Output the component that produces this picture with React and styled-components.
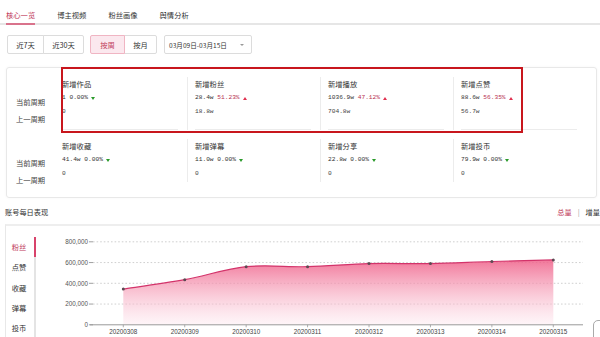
import React from 'react'
import styled, { createGlobalStyle } from 'styled-components'

const GlobalStyle = createGlobalStyle`
  html, body {
    margin: 0;
    padding: 0;
    background: #fff;
  }
  body {
    font-family: "Noto Sans CJK SC", "Noto Sans", sans-serif;
    color: #333;
  }
  * {
    box-sizing: border-box;
  }
`

const ACCENT = '#c0395a'
const CJK = `"Noto Sans CJK SC", "Noto Sans", sans-serif`
const MONO = `"Liberation Mono", "Noto Sans CJK SC", monospace`

const Page = styled.div`
  position: relative;
  width: 600px;
  height: 337px;
  overflow: hidden;
`

const TabBar = styled.div`
  display: flex;
  gap: 22px;
  height: 25px;
  padding-left: 6px;
  border-bottom: 2px solid #e6e6e6;
`

const Tab = styled.div`
  font-size: 7.3px;
  line-height: 14px;
  padding: 8px 0 1px;
  margin-bottom: -2px;
  height: 25px;
  color: ${p => (p.active ? ACCENT : '#333')};
  border-bottom: 2px solid ${p => (p.active ? '#d9738c' : 'transparent')};
`

const Toolbar = styled.div`
  display: flex;
  align-items: center;
  margin-top: 10px;
  padding-left: 7px;
  height: 19px;
`

const BtnGroup = styled.div`
  display: flex;
  margin-right: ${p => p.gap || 6}px;
`

const Btn = styled.div`
  position: relative;
  width: ${p => p.w}px;
  height: 19px;
  margin-left: ${p => (p.first ? 0 : -1)}px;
  display: flex;
  align-items: center;
  justify-content: center;
  font-size: 7.3px;
  border: 1px solid ${p => (p.active ? '#f0b5c3' : '#dcdcdc')};
  background: ${p => (p.active ? '#fbe8ee' : '#fff')};
  color: ${p => (p.active ? ACCENT : '#333')};
  z-index: ${p => (p.active ? 1 : 0)};
  border-radius: ${p => (p.first ? '2px 0 0 2px' : '0 2px 2px 0')};
`

const DateSelect = styled.div`
  width: 88px;
  height: 19px;
  display: flex;
  align-items: center;
  justify-content: space-between;
  padding: 0 7px 0 4px;
  border: 1px solid #dcdcdc;
  border-radius: 2px;
  font-size: 6.6px;
  color: #333;
`

const Caret = styled.span`
  width: 0;
  height: 0;
  border-left: 2px solid transparent;
  border-right: 2px solid transparent;
  border-top: 2px solid #999;
`

const MetricCard = styled.div`
  position: relative;
  margin: 13px 0 0 6px;
  width: 591px;
  border: 1px solid #e8e8e8;
  border-radius: 3px;
  box-shadow: 0 0 3px rgba(0, 0, 0, 0.04);
  padding-bottom: 9px;
`

const Highlight = styled.div`
  position: absolute;
  left: 54px;
  top: -1px;
  width: 462px;
  height: 65.5px;
  border: 2px solid #c8161d;
  pointer-events: none;
`

const MetricRow = styled.div`
  display: flex;
  align-items: flex-start;
  padding-top: 9px;
`

const LabelCol = styled.div`
  width: 47px;
  padding-top: ${p => p.offset}px;
  text-align: center;
  font-size: 7.3px;
  line-height: 16.5px;
  color: #444;
`

const Cell = styled.div`
  width: 133px;
  padding-left: 7px;
  border-left: 1px solid ${p => (p.first ? 'transparent' : '#ececec')};
`

const CellInner = styled.div`
  width: 116px;
  padding-bottom: ${p => (p.underline ? 10 : 0)}px;
  border-bottom: 1px solid ${p => (p.underline ? '#ececec' : 'transparent')};
`

const CellTitle = styled.div`
  font-size: 7.3px;
  line-height: 14px;
  color: #333;
  font-family: ${CJK};
`

const CellValue = styled.div`
  display: flex;
  align-items: center;
  font-family: ${MONO};
  font-size: 6.2px;
  line-height: 14px;
  color: #333;
  white-space: pre;
`

const Pct = styled.span`
  color: ${p => (p.up ? '#b8304f' : '#333')};
`

const Arrow = styled.span`
  display: inline-block;
  width: 0;
  height: 0;
  margin-left: 3px;
  border-left: 2.2px solid transparent;
  border-right: 2.2px solid transparent;
  ${p =>
    p.up
      ? 'border-bottom: 3px solid #e0304f;'
      : 'border-top: 3px solid #2a9a2a;'}
`

const PrevValue = styled.div`
  font-family: ${MONO};
  font-size: 6.2px;
  line-height: 14px;
  color: #444;
`

const SectionHeader = styled.div`
  display: flex;
  justify-content: space-between;
  height: 26px;
  padding: 7px 0 0 5px;
  font-size: 7.2px;
  line-height: 14px;
`

const Switcher = styled.div`
  display: flex;
  gap: 6px;
`

const SwitchItem = styled.span`
  color: ${p => (p.active ? ACCENT : '#333')};
`

const Pipe = styled.span`
  color: #999;
`

const ChartCard = styled.div`
  display: flex;
  margin-left: 5px;
  width: 600px;
  height: 130px;
  border: 1px solid #e8e8e8;
  border-top: 2px solid #eeeeee;
  background: #fff;
`

const SideMenu = styled.div`
  width: 30px;
  padding-top: 11px;
  display: flex;
  flex-direction: column;
`

const MenuItem = styled.div`
  height: 20.3px;
  flex-shrink: 0;
  display: flex;
  align-items: center;
  justify-content: center;
  font-size: 7.3px;
  color: ${p => (p.active ? ACCENT : '#333')};
  border-right: 2px solid ${p => (p.active ? '#d8436b' : '#e4e4e4')};
  padding-right: 2px;
`

const FloatTab = styled.div`
  position: absolute;
  left: 593px;
  top: 320px;
  width: 16px;
  height: 30px;
  border: 1px solid #aaa;
  border-radius: 5px;
  background: #fff;
`

const metrics = [
  [
    { title: '新增作品', cur: '1', pct: '0.00%', up: false, prev: '0' },
    { title: '新增粉丝', cur: '28.4w', pct: '51.23%', up: true, prev: '18.8w' },
    { title: '新增播放', cur: '1036.9w', pct: '47.12%', up: true, prev: '704.8w' },
    { title: '新增点赞', cur: '88.6w', pct: '56.35%', up: true, prev: '56.7w' },
  ],
  [
    { title: '新增收藏', cur: '41.4w', pct: '0.00%', up: false, prev: '0' },
    { title: '新增弹幕', cur: '11.0w', pct: '0.00%', up: false, prev: '0' },
    { title: '新增分享', cur: '22.8w', pct: '0.00%', up: false, prev: '0' },
    { title: '新增投币', cur: '79.9w', pct: '0.00%', up: false, prev: '0' },
  ],
]

const days = ['20200308', '20200309', '20200310', '20200311', '20200312', '20200313', '20200314', '20200315']
const fans = [345000, 435000, 560000, 560000, 590000, 590000, 610000, 625000]

// chart geometry, svg coords
const X0 = 87.3
const XSTEP = 61.43
const BASE = 98.8
const TOP = 15.8
const GRID_L = 57
const GRID_R = 547
const toY = v => BASE - (v / 800000) * (BASE - TOP)

function smoothPath(pts) {
  let d = `M${pts[0][0]},${pts[0][1]}`
  for (let i = 0; i < pts.length - 1; i++) {
    const p0 = pts[i - 1] || pts[i]
    const p1 = pts[i]
    const p2 = pts[i + 1]
    const p3 = pts[i + 2] || p2
    const c1x = p1[0] + (p2[0] - p0[0]) / 6
    const c1y = p1[1] + (p2[1] - p0[1]) / 6
    const c2x = p2[0] - (p3[0] - p1[0]) / 6
    const c2y = p2[1] - (p3[1] - p1[1]) / 6
    d += ` C${c1x},${c1y} ${c2x},${c2y} ${p2[0]},${p2[1]}`
  }
  return d
}

function FansChart() {
  const pts = fans.map((v, i) => [X0 + i * XSTEP, toY(v)])
  const line = smoothPath(pts)
  const last = pts[pts.length - 1]
  const area = `${line} L${last[0]},${BASE} L${pts[0][0]},${BASE} Z`
  const ticks = [800000, 600000, 400000, 200000, 0]

  return (
    <svg width="565" height="128" style={{ display: 'block', flexShrink: 0 }}>
      <defs>
        <linearGradient id="fansFill" x1="0" y1="0" x2="0" y2="1">
          <stop offset="0%" stopColor="#ef5f88" stopOpacity="0.85" />
          <stop offset="100%" stopColor="#fde6ee" stopOpacity="0.4" />
        </linearGradient>
      </defs>
      {ticks.map(t => {
        const y = toY(t)
        return (
          <g key={t}>
            <text
              x="52"
              y={y + 2.2}
              textAnchor="end"
              fontFamily="Liberation Sans, sans-serif"
              fontSize="6.3"
              fill="#555"
            >
              {t === 0 ? '0' : t.toLocaleString('en-US')}
            </text>
            <line x1="53" x2="57" y1={y} y2={y} stroke="#888" strokeWidth="0.8" />
            {t !== 0 && (
              <line
                x1={GRID_L}
                x2={GRID_R}
                y1={y}
                y2={y}
                stroke="#c4c4c4"
                strokeWidth="0.8"
                strokeDasharray="1.6 2"
              />
            )}
          </g>
        )
      })}
      <path d={area} fill="url(#fansFill)" />
      <path d={line} fill="none" stroke="#d3336a" strokeWidth="1.2" />
      <line x1="54" x2={GRID_R} y1={BASE} y2={BASE} stroke="#999" strokeWidth="1" />
      {days.map((d, i) => {
        const x = X0 + i * XSTEP
        return (
          <g key={d}>
            <line x1={x} x2={x} y1={BASE} y2={BASE + 2.5} stroke="#999" strokeWidth="0.8" />
            <text
              x={x}
              y="108.3"
              textAnchor="middle"
              fontFamily="Liberation Sans, sans-serif"
              fontSize="6.3"
              fill="#444"
            >
              {d}
            </text>
          </g>
        )
      })}
      {pts.map((p, i) => (
        <circle key={i} cx={p[0]} cy={p[1]} r="1.5" fill="#5d4952" />
      ))}
    </svg>
  )
}

function Metric({ m, first, underline }) {
  return (
    <Cell first={first}>
      <CellInner underline={underline}>
        <CellTitle>{m.title}</CellTitle>
        <CellValue>
          {m.cur + ' '}
          <Pct up={m.up}>{m.pct}</Pct>
          <Arrow up={m.up} />
        </CellValue>
        <PrevValue>{m.prev}</PrevValue>
      </CellInner>
    </Cell>
  )
}

export default function App() {
  return (
    <Page>
      <GlobalStyle />
      <TabBar>
        <Tab active>核心一览</Tab>
        <Tab>博主视频</Tab>
        <Tab>粉丝画像</Tab>
        <Tab>舆情分析</Tab>
      </TabBar>

      <Toolbar>
        <BtnGroup>
          <Btn first w={37}>近7天</Btn>
          <Btn w={41}>近30天</Btn>
        </BtnGroup>
        <BtnGroup gap={7}>
          <Btn first active w={35}>按周</Btn>
          <Btn w={33}>按月</Btn>
        </BtnGroup>
        <DateSelect>
          <span>03月09日-03月15日</span>
          <Caret />
        </DateSelect>
      </Toolbar>

      <MetricCard>
        {metrics.map((row, r) => (
          <MetricRow key={r}>
            <LabelCol offset={r === 0 ? 17 : 16}>
              <div>当前周期</div>
              <div>上一周期</div>
            </LabelCol>
            {row.map((m, i) => (
              <Metric key={m.title} m={m} first={i === 0} underline={r === 0} />
            ))}
          </MetricRow>
        ))}
        <Highlight />
      </MetricCard>

      <SectionHeader>
        <span>账号每日表现</span>
        <Switcher>
          <SwitchItem active>总量</SwitchItem>
          <Pipe>|</Pipe>
          <SwitchItem>增量</SwitchItem>
        </Switcher>
      </SectionHeader>

      <ChartCard>
        <SideMenu>
          <MenuItem active>粉丝</MenuItem>
          <MenuItem>点赞</MenuItem>
          <MenuItem>收藏</MenuItem>
          <MenuItem>弹幕</MenuItem>
          <MenuItem>投币</MenuItem>
        </SideMenu>
        <FansChart />
      </ChartCard>

      <FloatTab />
    </Page>
  )
}
